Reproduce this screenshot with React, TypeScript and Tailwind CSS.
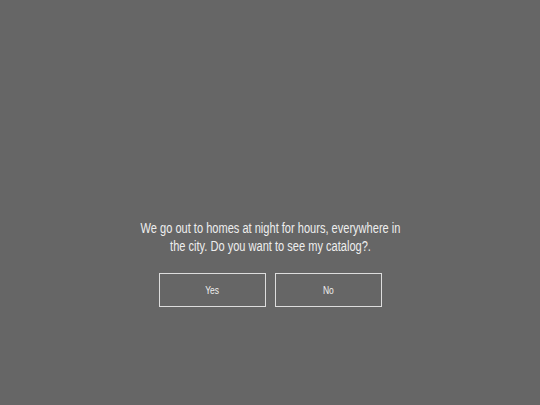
export default function App() {
  return (
    <div className="flex h-[405px] w-[540px] flex-col items-center bg-[#666666] pt-[219px] font-['Liberation_Sans',Arial,sans-serif] text-[#eeeeee]">
      <p className="w-[335px] origin-center scale-x-[0.79] text-center text-[14px] leading-[18px]">
        We go out to homes at night for hours, everywhere in the city. Do you want to see my catalog?.
      </p>
      <div className="mt-[18px] flex gap-[9px]">
        <button className="h-[34px] w-[107px] border-[1.5px] border-[#dddddd] text-[10px] text-[#eeeeee]">
          <span className="inline-block scale-x-[0.85]">Yes</span>
        </button>
        <button className="h-[34px] w-[107px] border-[1.5px] border-[#dddddd] text-[10px] text-[#eeeeee]">
          <span className="inline-block scale-x-[0.85]">No</span>
        </button>
      </div>
    </div>
  );
}
